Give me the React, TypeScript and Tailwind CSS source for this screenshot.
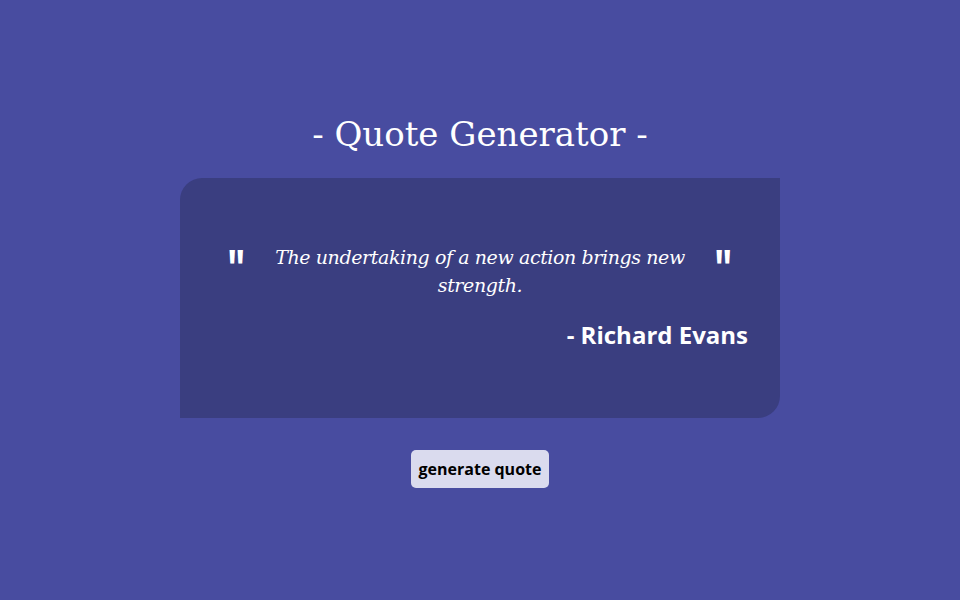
export default function App() {
  return (
    <div className="min-h-screen w-full bg-[#484ca0] flex flex-col items-center justify-center">
      {/* title */}
      <h1 className="text-[34px] leading-[44px] text-white font-['DejaVu_Serif',serif] mb-[22px]">
        - Quote Generator -
      </h1>

      {/* quote card */}
      <div className="w-[600px] h-[240px] bg-[#3a3e80] rounded-tl-[22px] rounded-br-[22px] px-8 flex flex-col justify-center">
        <div className="flex items-start justify-between px-[12px]">
          <span className="text-white text-[52px] leading-[44px] font-bold font-['Open_Sans',sans-serif] mt-0 scale-x-75">
            "
          </span>
          <p className="w-[420px] -mt-[2px] text-center text-white italic text-[19px] leading-[28px] font-['DejaVu_Serif',serif] font-light tracking-[-0.4px]">
            The undertaking of a new action brings new strength.
          </p>
          <span className="text-white text-[52px] leading-[44px] font-bold font-['Open_Sans',sans-serif] mt-0 scale-x-75">
            "
          </span>
        </div>
        <p className="mt-[20px] text-right text-white text-[24px] leading-[32px] font-bold font-['Open_Sans',sans-serif]">
          - Richard Evans
        </p>
      </div>

      {/* button */}
      <button className="mt-8 h-[38px] px-2 rounded-[5px] bg-[#dadbee] text-black text-[16px] font-bold font-['Open_Sans',sans-serif]">
        generate quote
      </button>
    </div>
  );
}
